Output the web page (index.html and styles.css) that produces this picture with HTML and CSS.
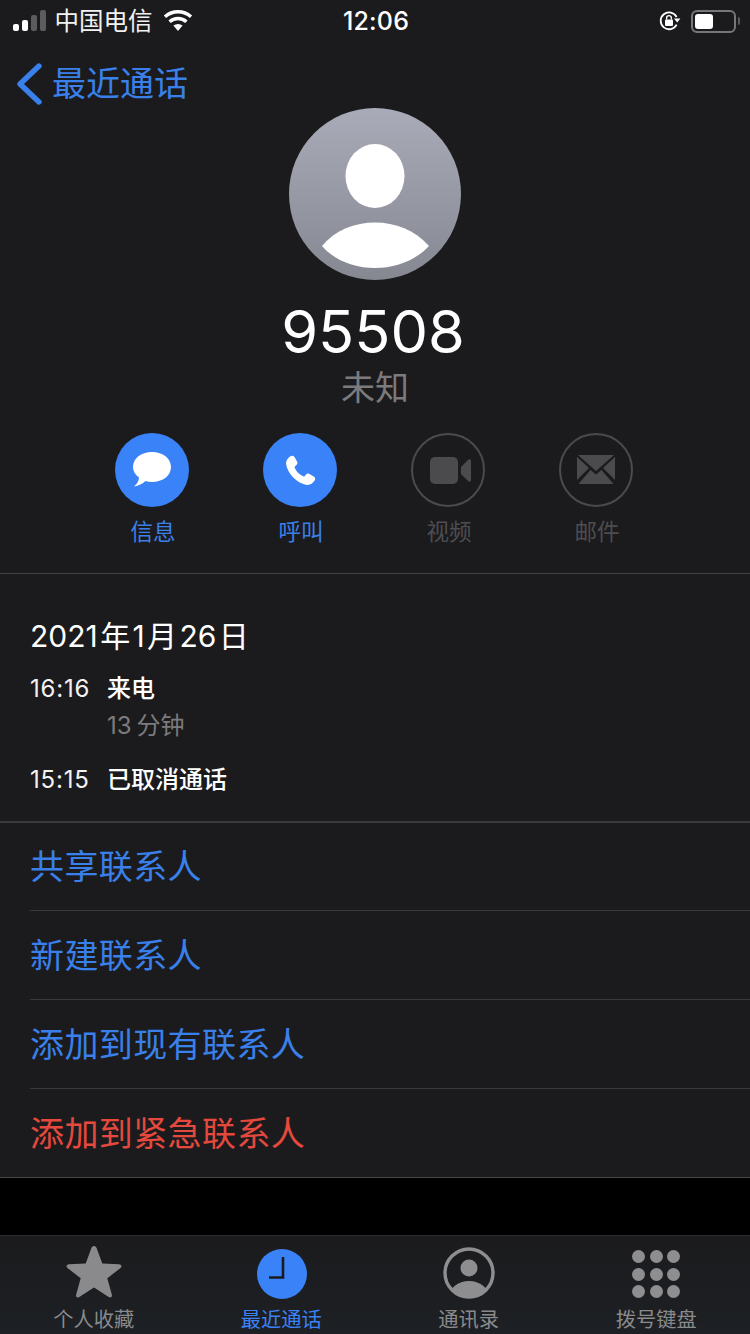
FILE: index.html
```html
<!DOCTYPE html>
<html lang="zh-CN">
<head>
    <meta charset="UTF-8">
    <meta name="viewport" content="width=device-width, initial-scale=1.0">
    <title>95508</title>
    <link rel="stylesheet" href="styles.css">
</head>
<body>

<div class="phone">
    <div class="status-bar">
        <div class="status-left">
            <svg class="signal" width="34" height="22" viewBox="0 0 34 22">
                <rect x="0" y="14" width="6" height="7" rx="2" fill="#fff"/>
                <rect x="9" y="10" width="6" height="11" rx="2" fill="#fff"/>
                <rect x="18" y="5" width="6" height="16" rx="2" fill="#5c5c5e"/>
                <rect x="27" y="0" width="6" height="21" rx="2" fill="#5c5c5e"/>
            </svg>
            <span class="carrier">中国电信</span>
            <svg class="wifi" width="30" height="22" viewBox="0 0 30 22">
                <path d="M15 21 L10.4 15.6 A7 7 0 0 1 19.6 15.6 Z" fill="#fff"/>
                <path d="M6.6 11.8 A12.4 12.4 0 0 1 23.4 11.8" fill="none" stroke="#fff" stroke-width="3.4"/>
                <path d="M2 6.8 A19.4 19.4 0 0 1 28 6.8" fill="none" stroke="#fff" stroke-width="3.4"/>
            </svg>
        </div>
        <div class="clock">12:06</div>
        <div class="status-right">
            <svg width="22" height="22" viewBox="0 0 22 22">
                <path d="M17.6 14.6 A8.4 8.4 0 1 1 17.6 7" fill="none" stroke="#fff" stroke-width="1.8"/>
                <path d="M15 8.6 L21.4 8.6 L18.2 12.4 Z" fill="#fff"/>
                <rect x="6" y="9.6" width="8" height="6.4" rx="1" fill="#fff"/>
                <path d="M7.6 9.6 V8 A2.4 2.4 0 0 1 12.4 8 V9.6" fill="none" stroke="#fff" stroke-width="1.4"/>
            </svg>
            <div class="battery"><div class="battery-level"></div></div>
            <div class="battery-cap"></div>
        </div>
    </div>

    <div class="nav">
        <svg class="back-icon" width="26" height="44" viewBox="0 0 26 44">
            <path d="M23 4 L4 22 L23 40" fill="none" stroke="#3a80ea" stroke-width="5.4" stroke-linecap="round" stroke-linejoin="round"/>
        </svg>
        <span class="back-label">最近通话</span>
    </div>

    <div class="profile">
        <svg class="avatar" width="172" height="172" viewBox="0 0 172 172">
            <defs>
                <linearGradient id="avatarFill" x1="0" y1="0" x2="0" y2="1">
                    <stop offset="0" stop-color="#a9acb8"/>
                    <stop offset="1" stop-color="#858891"/>
                </linearGradient>
            </defs>
            <circle cx="86" cy="86" r="86" fill="url(#avatarFill)"/>
            <ellipse cx="86" cy="68" rx="29.5" ry="32" fill="#fff"/>
            <path d="M33 138 C46 122 66 114.500 86 114.500 C106 114.500 126 122 140 138 C126 153 106 160 86 160 C66 160 46 153 33 138 Z" fill="#fff"/>
        </svg>
        <div class="number">95508</div>
        <div class="location">未知</div>
    </div>

    <div class="actions">
        <div class="action">
            <div class="action-circle">
                <svg width="40" height="38" viewBox="0 0 40 38">
                    <path d="M20 1 C31 1 39 7.500 39 16 C39 24.500 31 31 20 31 C17.600 31 15.500 30.700 13.500 30.100 C10.500 33 6.500 35 2 35.500 C5 33 6.800 30.200 7 26.500 C3 23.800 1 20.200 1 16 C1 7.500 9 1 20 1 Z" fill="#fff"/>
                </svg>
            </div>
            <span>信息</span>
        </div>
        <div class="action">
            <div class="action-circle">
                <svg width="31" height="31" viewBox="0 0 34 34">
                    <path d="M6 1.500 C8 0.200 9.600 0.800 10.600 2.500 L13.200 7.200 C14 8.800 13.700 10 12.500 11 L10.800 12.500 C10.400 13 10.400 13.600 10.700 14.200 C12.800 18.300 15.800 21.400 19.800 23.400 C20.500 23.700 21 23.600 21.500 23.200 L23 21.500 C24 20.300 25.300 20 26.800 20.900 L31.500 23.500 C33.200 24.500 33.700 26.200 32.500 28 C30.500 31.300 27.300 33.200 24 32.800 C13.500 31.500 2.500 20.500 1.200 10 C0.800 6.700 2.800 3.500 6 1.500 Z" fill="#fff"/>
                </svg>
            </div>
            <span>呼叫</span>
        </div>
        <div class="action action-off">
            <div class="action-circle">
                <svg class="video-icon" width="41" height="27" viewBox="0 0 41 27">
                    <rect x="0" y="0" width="28" height="27" rx="5" fill="#4b4b4e"/>
                    <path d="M31 10 L38 3 C39.500 1.800 41 2.400 41 4 V23 C41 24.600 39.500 25.200 38 24 L31 17 Z" fill="#4b4b4e"/>
                </svg>
            </div>
            <span>视频</span>
        </div>
        <div class="action action-off">
            <div class="action-circle">
                <svg width="38" height="30" viewBox="0 0 38 30">
                    <path d="M1 0 H37 L19 16 Z" fill="#4b4b4e"/>
                    <path d="M0 2 L12 13 L0 25 Z" fill="#4b4b4e"/>
                    <path d="M38 2 L26 13 L38 25 Z" fill="#4b4b4e"/>
                    <path d="M1.500 29 L13.500 15 L19 19.500 L24.500 15 L36.500 29 Z" fill="#4b4b4e"/>
                </svg>
            </div>
            <span>邮件</span>
        </div>
    </div>

    <div class="history">
        <div class="history-date">2021<span class="cjk-gap">年</span>1<span class="cjk-gap">月</span>26<span class="cjk-gap">日</span></div>
        <div class="call">
            <div class="call-time">16:16</div>
            <div class="call-info">
                <div>来电</div>
                <div class="call-length">13<span class="cjk-gap">分钟</span></div>
            </div>
        </div>
        <div class="call">
            <div class="call-time">15:15</div>
            <div class="call-info">已取消通话</div>
        </div>
    </div>

    <div class="links">
        <div class="link">共享联系人</div>
        <div class="link">新建联系人</div>
        <div class="link">添加到现有联系人</div>
        <div class="link link-red">添加到紧急联系人</div>
    </div>

    <div class="gap"></div>

    <div class="tabbar">
        <div class="tab">
            <svg width="58" height="54" viewBox="0 0 58 54">
                <path d="M29 1 C30.500 1 31.200 2 31.800 3.500 L37.300 18.600 L54 19.300 C56.500 19.500 57.300 21.500 55.500 23 L42.300 33.300 L46.800 49.600 C47.400 52 45.700 53.200 43.700 52 L29 42.500 L14.300 52 C12.300 53.200 10.600 52 11.200 49.600 L15.700 33.300 L2.500 23 C0.700 21.500 1.500 19.500 4 19.300 L20.700 18.600 L26.200 3.500 C26.800 2 27.500 1 29 1 Z" fill="#8a8a8c"/>
            </svg>
            <span>个人收藏</span>
        </div>
        <div class="tab tab-on">
            <svg width="50" height="50" viewBox="0 0 50 50">
                <circle cx="25" cy="25" r="25" fill="#3a82f7"/>
                <path d="M26 8 V28.500 H12" fill="none" stroke="#1b1b1d" stroke-width="2.600"/>
            </svg>
            <span>最近通话</span>
        </div>
        <div class="tab">
            <svg width="52" height="52" viewBox="0 0 52 52">
                <defs>
                    <clipPath id="contactClip"><circle cx="26" cy="26" r="24"/></clipPath>
                </defs>
                <circle cx="26" cy="21" r="8.500" fill="#8e8e90"/>
                <ellipse cx="26" cy="50" rx="20" ry="16" fill="#8e8e90" clip-path="url(#contactClip)"/>
                <circle cx="26" cy="26" r="24" fill="none" stroke="#8e8e90" stroke-width="3.400"/>
            </svg>
            <span>通讯录</span>
        </div>
        <div class="tab">
            <div class="keypad">
                <i></i><i></i><i></i>
                <i></i><i></i><i></i>
                <i></i><i></i><i></i>
            </div>
            <span>拨号键盘</span>
        </div>
    </div>
</div>

</body>
</html>
```

FILE: styles.css
```css
* {
    box-sizing: border-box;
}
body {
    margin: 0;
    background: #000;
    font-family: Inter, "Noto Sans CJK SC", sans-serif;
}
.phone {
    width: 750px;
    height: 1334px;
    display: flex;
    flex-direction: column;
    overflow: hidden;
    background: #1b1b1d;
    color: #fff;
}

.status-bar {
    height: 40px;
    padding: 2px 10px 0 13px;
    display: flex;
    justify-content: space-between;
    align-items: center;
}
.status-left {
    width: 200px;
    display: flex;
    align-items: center;
}
.signal {
    margin-right: 7.5px;
}
.carrier {
    font-size: 24.5px;
    line-height: 38px;
    margin-right: 10px;
    color: #f2f2f2;
}
.clock {
    font-size: 25px;
    font-weight: 500;
    letter-spacing: 0.2px;
    margin-right: 1px;
}
.status-right {
    width: 200px;
    display: flex;
    justify-content: flex-end;
    align-items: center;
}
.battery {
    width: 45px;
    height: 23px;
    margin-left: 10px;
    padding: 2px;
    border: 2px solid #77777a;
    border-radius: 6px;
}
.battery-level {
    width: 18px;
    height: 100%;
    background: #fff;
    border-radius: 3px;
}
.battery-cap {
    width: 2px;
    height: 8px;
    margin-left: 2px;
    background: #5c5c5e;
    border-radius: 0 2px 2px 0;
}

.nav {
    height: 68px;
    padding: 20px 0 0 16px;
    display: flex;
    align-items: center;
    color: #3a80ea;
}
.back-label {
    font-size: 34px;
    line-height: 44px;
    margin-left: 10px;
}

.profile {
    display: flex;
    flex-direction: column;
    align-items: center;
}
.number {
    font-size: 59.5px;
    line-height: 74px;
    margin: 14px 4px 0 0;
}
.location {
    font-size: 34px;
    line-height: 40px;
    color: #7b7b7d;
}

.actions {
    height: 166px;
    padding: 25px 0 0 78px;
    display: flex;
    border-bottom: 1px solid #434345;
    font-size: 22.5px;
}
.action {
    width: 148px;
    display: flex;
    flex-direction: column;
    align-items: center;
    color: #3a80ea;
}
.action span {
    line-height: 32px;
    margin: 9px 0 0 2px;
}
.action-circle {
    width: 74px;
    height: 74px;
    display: flex;
    align-items: center;
    justify-content: center;
    background: #3a82f7;
    border-radius: 50%;
}
.action-off {
    color: #4d4d50;
}
.action-off .action-circle {
    background: none;
    border: 2px solid #4b4b4e;
}
.video-icon {
    margin-left: 4px;
}

.history {
    height: 249px;
    padding: 40px 0 0 30px;
    border-bottom: 2px solid #3a3a3c;
}
.history-date {
    font-size: 30px;
    line-height: 44px;
}
.cjk-gap {
    margin: 0 2.4px;
}
.cjk-gap:last-child {
    margin-right: 0;
}
.call {
    display: flex;
    font-size: 24px;
    line-height: 36px;
    margin-bottom: 17px;
    margin-top: 13px;
}
.call + .call {
    margin-top: 0;
}
.call-time {
    width: 77px;
    letter-spacing: 0.8px;
    color: #f2f2f2;
}
.call-info {
    font-weight: 500;
}
.call-length {
    color: #7b7b7d;
    font-weight: 400;
    line-height: 38px;
}
.call-length .cjk-gap {
    margin-left: 5px;
}

.link {
    height: 89px;
    margin-left: 30px;
    padding-bottom: 3px;
    display: flex;
    align-items: center;
    font-size: 34px;
    letter-spacing: 0.4px;
    color: #3a80ea;
    border-bottom: 1px solid #3a3a3c;
}
.link:first-child {
    height: 88px;
    padding-bottom: 4px;
}
.link:last-child {
    margin-left: 0;
    padding-left: 30px;
}
.link-red {
    color: #e5493e;
    border-bottom-color: #48484a;
}

.gap {
    flex: 1;
    background: #000;
}

.tabbar {
    height: 99px;
    padding-top: 3px;
    display: flex;
    border-top: 1px solid #2c2c2e;
    background: linear-gradient(#1b1b1d, #1d2024);
    font-size: 20.25px;
    color: #8a8a8c;
}
.tab {
    width: 187.5px;
    display: flex;
    flex-direction: column;
    align-items: center;
    justify-content: flex-end;
    height: 95px;
}
.tab span {
    line-height: 28px;
    margin-top: 7px;
}
.tab-on {
    color: #3a82f7;
}
.tab-on svg {
    margin-left: 2px;
}
.keypad {
    display: grid;
    grid-template-columns: repeat(3, 13px);
    gap: 4.5px;
    margin-bottom: 1px;
}
.keypad i {
    height: 13px;
    background: #8e8e90;
    border-radius: 50%;
}
```
